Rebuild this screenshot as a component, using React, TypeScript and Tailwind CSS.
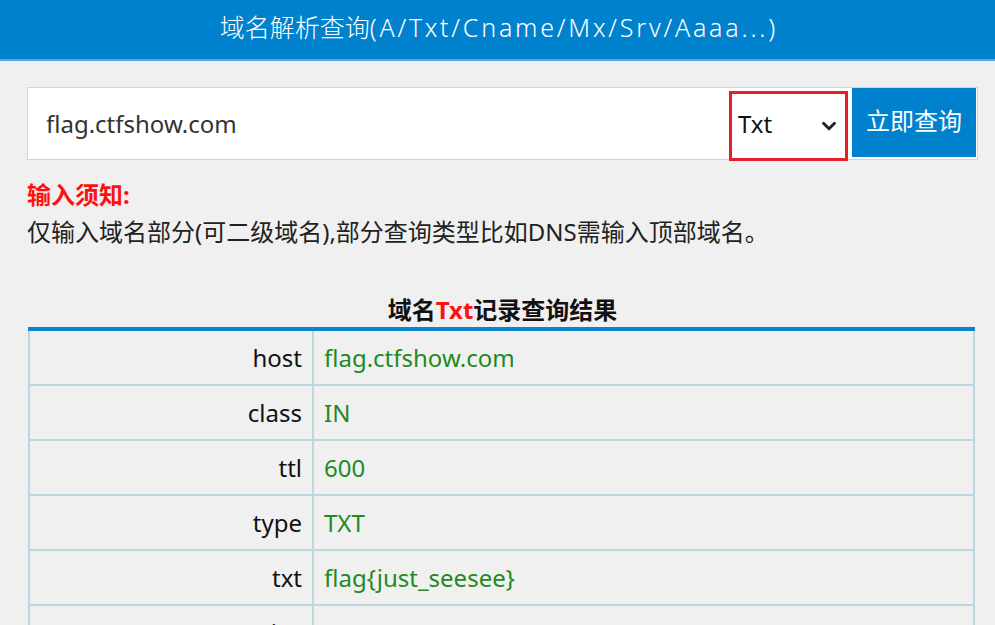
import React from "react";
import { ChevronDown } from "lucide-react";

const rows: [string, string][] = [
  ["host", "flag.ctfshow.com"],
  ["class", "IN"],
  ["ttl", "600"],
  ["type", "TXT"],
  ["txt", "flag{just_seesee}"],
  ["entries", "Array"],
];

export default function App() {
  return (
    <div
      className="w-[995px] h-[625px] overflow-hidden bg-[#f0f0f0] text-[#222]"
      style={{ fontFamily: '"Noto Sans", "Noto Sans CJK SC", sans-serif' }}
    >
      <div className="h-[61px] pb-[3px] bg-[#0081cd] border-b-2 border-[#5aa9dd] flex items-center justify-center">
        <h1 className="text-white text-[25px] font-light">
          域名解析查询<span className="tracking-[2.8px]">(A/Txt/Cname/Mx/Srv/Aaaa...</span>)
        </h1>
      </div>

      <div className="pl-[27px] pr-[17px] pt-[26px]">
        <div className="flex h-[73px] border border-[#d4d4d4] bg-white">
          <div className="flex-1 flex items-center pl-[18px] text-[24px] text-[#333]">
            flag.ctfshow.com
          </div>
          <div className="w-[119px] mt-[3px] -mb-[2px] border-[3px] border-[#e61e2b] flex items-center justify-between pl-[6px] pr-[5px] pb-[4px] text-[24px] text-[#111]">
            <span>Txt</span>
            <ChevronDown size={22} strokeWidth={3.2} className="text-[#222] mt-[3px]" />
          </div>
          <button className="w-[124px] ml-[4px] mr-[1px] mb-[2px] pb-[3px] bg-[#0081cd] text-white text-[24px]">
            立即查询
          </button>
        </div>

        <div className="mt-[17px] text-[24px] leading-[36px] font-bold text-[#ff1010]">
          输入须知:
        </div>
        <div className="text-[24px] leading-[38px] text-[#222]">
          仅输入域名部分(可二级域名),部分查询类型比如DNS需输入顶部域名。
        </div>

        <div className="mt-[41px] text-center text-[24px] leading-[35px] font-bold text-[#111]">
          域名<span className="text-[#ff1010]">Txt</span>记录查询结果
        </div>

        <div className="mr-[3px] ml-[1px] border-t-4 border-[#0a84d0]">
          <div className="border-l-2 border-r-2 border-[#bfd6e0]">
            {rows.map(([k, v]) => (
              <div
                key={k}
                className="grid grid-cols-[284px_1fr] h-[55px] border-b-2 border-[#bfd6e0] text-[24px]"
              >
                <div className="flex items-center justify-end pr-[10px] border-r-2 border-[#bfd6e0] text-[#111]">
                  {k}
                </div>
                <div className="flex items-center pl-[10px] text-[#1f8a1f]">{v}</div>
              </div>
            ))}
          </div>
        </div>
      </div>
    </div>
  );
}
